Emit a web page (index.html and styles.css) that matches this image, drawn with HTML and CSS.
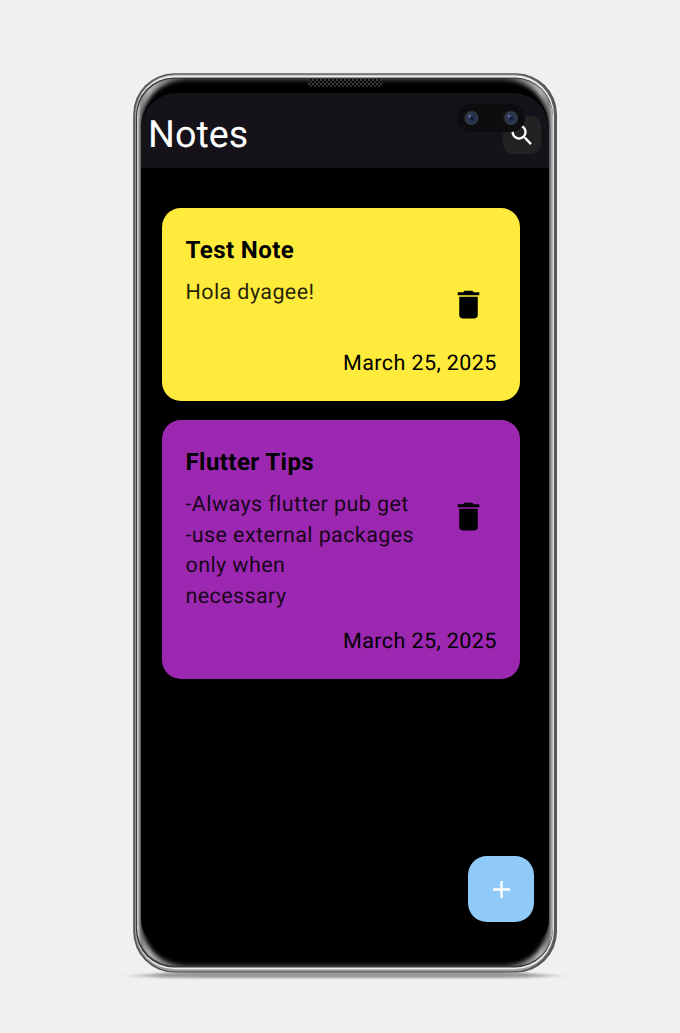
FILE: index.html
```html
<!DOCTYPE html>
<html lang="en">
<head>
<meta charset="utf-8">
<title>Notes</title>
<link rel="stylesheet" href="styles.css">
</head>
<body>
<main class="phone">
  <svg class="frame" width="460" height="920" viewBox="115 65 460 920" aria-hidden="true">
    <defs>
      <linearGradient id="ground"><stop offset="0" stop-color="#aaa" stop-opacity=".2"/><stop offset=".1" stop-color="#999"/><stop offset=".9" stop-color="#999"/><stop offset="1" stop-color="#aaa" stop-opacity=".2"/></linearGradient>
      <filter id="soft" x="-10%" y="-10%" width="120%" height="120%"><feGaussianBlur stdDeviation="2"/></filter>
      <filter id="haze" x="-5%" y="-100%" width="110%" height="300%"><feGaussianBlur stdDeviation=".8"/></filter>
      <linearGradient id="edge" gradientUnits="userSpaceOnUse" x1="137" y1="0" x2="553" y2="0"><stop offset="0" stop-color="#ddd"/><stop offset=".01" stop-color="#888"/><stop offset=".03" stop-color="#b4b4b4"/><stop offset=".12" stop-color="#444"/><stop offset=".88" stop-color="#444"/><stop offset=".97" stop-color="#b4b4b4"/><stop offset=".99" stop-color="#808080"/><stop offset="1" stop-color="#c4c4c4"/></linearGradient>
      <clipPath id="inside"><rect x="137" y="78.500" width="416" height="887.500" rx="38"/></clipPath>
      <pattern id="mesh" x="308" y="79" width="4" height="4" patternUnits="userSpaceOnUse"><rect width="4" height="4" fill="#0c0c0c"/><rect width="2" height="2" fill="#3b3b3b"/><rect x="2" y="2" width="2" height="2" fill="#2b2b2b"/></pattern>
      <radialGradient id="lens" cx=".55" cy=".5"><stop offset="0" stop-color="#3a4a70"/><stop offset=".25" stop-color="#33446d"/><stop offset=".6" stop-color="#232e4a"/><stop offset=".8" stop-color="#3a3c46"/><stop offset="1" stop-color="#17181c"/></radialGradient>
    </defs>
    <path d="M119 976Q160 973 200 971H490Q530 973 571 976Q530 978 490 978H200Q160 978 119 976Z" fill="url(#ground)" filter="url(#haze)"/>
    <rect x="133.200" y="73.300" width="423.800" height="899.200" rx="41" fill="#585858"/>
    <rect x="135" y="74.500" width="419" height="896.700" rx="40" fill="#a0a0a0"/>
    <rect x="135.800" y="75.500" width="418" height="893.800" rx="39" fill="#f0f0f0"/>
    <rect x="135.800" y="77.500" width="417.200" height="890" rx="38" fill="#3a3a3a"/>
    <g clip-path="url(#inside)">
      <rect x="137" y="78" width="416" height="888" fill="url(#edge)"/>
      <rect x="141.500" y="80.500" width="407" height="884.500" rx="42" filter="url(#soft)"/>
    </g>
    <path d="M141 130Q141 93 178 93H512Q549 93 549 130V918Q549 930 543 937L527 950H163L147 937Q141 930 141 918Z"/>
    <rect x="308" y="79" width="75" height="8" rx="3" fill="url(#mesh)"/>
  </svg>
  <div class="screen">
    <header class="app-bar">
      <h1 class="app-title">Notes</h1>
      <button class="search" aria-label="Search"><svg width="28" height="28" viewBox="0 0 24 24"><path fill="#fff" d="M15.500 14h-.79l-.28-.27C15.410 12.590 16 11.110 16 9.500 16 5.910 13.090 3 9.500 3S3 5.910 3 9.500 5.910 16 9.500 16c1.610 0 3.090-.59 4.230-1.570l.27.28v.79l5 4.990L20.490 19l-4.990-5zm-6 0C7.010 14 5 11.990 5 9.500S7.010 5 9.500 5 14 7.010 14 9.500 11.990 14 9.500 14z"/></svg></button>
    </header>
    <section class="notes">
      <article class="note note-yellow">
        <h2 class="note-title">Test Note</h2>
        <div class="note-row">
          <p class="note-body">Hola dyagee!</p>
          <button class="delete" aria-label="Delete"><svg width="37" height="37" viewBox="0 0 24 24"><path d="M6 19c0 1.100.9 2 2 2h8c1.100 0 2-.9 2-2V7H6v12zM19 4h-3.500l-1-1h-5l-1 1H5v2h14V4z"/></svg></button>
        </div>
        <time class="note-date">March 25, 2025</time>
      </article>
      <article class="note note-purple">
        <h2 class="note-title">Flutter Tips</h2>
        <div class="note-row">
          <p class="note-body">-Always flutter pub get<br>-use external packages<br>only when<br>necessary</p>
          <button class="delete" aria-label="Delete"><svg width="37" height="37" viewBox="0 0 24 24"><path d="M6 19c0 1.100.9 2 2 2h8c1.100 0 2-.9 2-2V7H6v12zM19 4h-3.500l-1-1h-5l-1 1H5v2h14V4z"/></svg></button>
        </div>
        <time class="note-date">March 25, 2025</time>
      </article>
    </section>
    <button class="add" aria-label="Add note"><svg width="29" height="29" viewBox="0 0 24 24"><path fill="#fff" d="M19 13h-6v6h-2v-6H5v-2h6V5h2v6h6v2z"/></svg></button>
  </div>
  <svg class="camera" width="69" height="28" viewBox="0 0 69 28" aria-hidden="true">
    <rect width="68" height="28" rx="14" fill="#0d0d10"/>
    <circle cx="14" cy="14" r="7.500" fill="url(#lens)"/>
    <circle cx="15" cy="14.500" r="2.300" fill="#151c30"/>
    <circle cx="12.500" cy="12" r="1.500" fill="#5b6c94"/>
    <circle cx="53.500" cy="14" r="7.500" fill="url(#lens)"/>
    <circle cx="54.500" cy="14.500" r="2.300" fill="#151c30"/>
    <circle cx="52" cy="12" r="1.500" fill="#5b6c94"/>
  </svg>
</main>
</body>
</html>
```
FILE: styles.css
```css
* { box-sizing: border-box; }
body {
  margin: 0;
  height: 1033px;
  overflow: hidden;
  background: #f0f0f0;
  font-family: Roboto, sans-serif;
  text-rendering: geometricPrecision;
}
button { border: 0; padding: 0; display: grid; place-items: center; }
h1, h2, p { margin: 0; }
.phone {
  position: relative;
  width: 680px;
  height: 1033px;
  padding: 93px 131px 0 141px;
}
.frame { position: absolute; left: 115px; top: 65px; }
.screen {
  position: relative;
  width: 408px;
  height: 846px;
  display: flex;
  flex-direction: column;
}
.app-bar {
  height: 75px;
  padding: 8px 8px 0 7px;
  display: flex;
  align-items: center;
  justify-content: space-between;
  background: #15121a;
  border-radius: 36px 36px 0 0;
}
.app-title { color: #fff; font-size: 37.7px; font-weight: 400; line-height: 48px; }
.search { width: 38px; height: 38px; border-radius: 10px; background: #222; }
.notes { display: flex; flex-direction: column; gap: 19px; padding: 40px 29px 0 21px; }
.note {
  display: flex;
  flex-direction: column;
  padding: 24.6px 23.3px 22.6px 23.5px;
  border-radius: 19px;
  letter-spacing: 0.4px;
}
.note-yellow { height: 193.3px; background: #ffeb3b; }
.note-purple { height: 259.1px; background: #9c27b0; }
.note-title { font-size: 24.1px; font-weight: 700; line-height: 35px; }
.note-row { display: flex; justify-content: space-between; padding-top: 10px; }
.note-body { font-size: 21.5px; line-height: 30.7px; color: rgba(0, 0, 0, 0.87); white-space: nowrap; }
.delete { width: 57px; height: 54px; background: none; }
.note-date { margin-top: auto; align-self: flex-end; font-size: 21.5px; line-height: 30px; }
.add {
  width: 66px;
  height: 66px;
  margin: auto 15px 16.6px auto;
  border-radius: 19px;
  background: #90caf9;
}
.camera { position: absolute; left: 457px; top: 104px; }
```
